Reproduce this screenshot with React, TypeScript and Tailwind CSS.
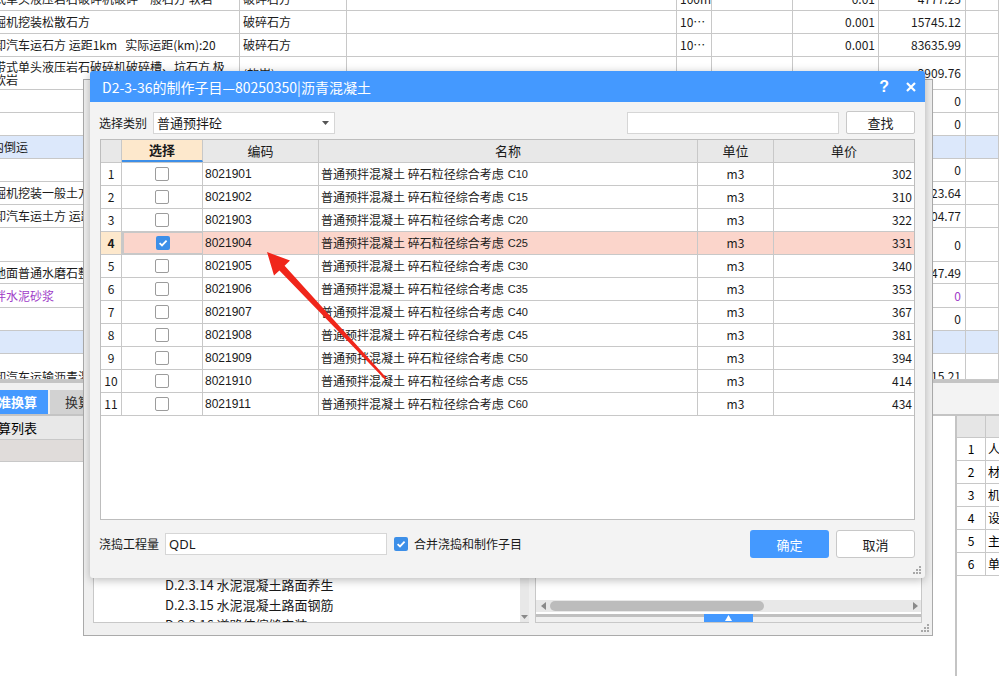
import React from "react";

const FONT = "font-['Noto_Sans_CJK_SC','Noto_Sans',sans-serif]";

type BgRow = {
  h: string;
  c1?: React.ReactNode;
  c1cls?: string;
  c2?: string;
  c4?: string;
  c6?: string;
  c7?: string;
  blue?: boolean;
  purple?: boolean;
};

const bgRows: BgRow[] = [
  { h: "h-[23px]", c1: "带式单头液压岩石破碎机破碎一般石方 软岩", c2: "破碎石方", c4: "100m3", c6: "0.01", c7: "4777.25" },
  { h: "h-[23px]", c1: "挖掘机挖装松散石方", c2: "破碎石方", c4: "10⋯", c6: "0.001", c7: "15745.12" },
  { h: "h-[23px]", c1: "自卸汽车运石方 运距1km\u00a0\u00a0 实际运距(km):20", c2: "破碎石方", c4: "10⋯", c6: "0.001", c7: "83635.99" },
  {
    h: "h-[33px]",
    c1: (
      <span className="flex flex-col leading-[13px]">
        <span>履带式单头液压岩石破碎机破碎槽、坑石方 极</span>
        <span className="ml-[12px]">软岩</span>
      </span>
    ),
    c2: "(软岩)",
    c7: "2909.76",
  },
  { h: "h-[23px]", c7: "0" },
  { h: "h-[23px]", c7: "0" },
  { h: "h-[23px]", c1: "场内倒运", c1cls: "-ml-[20px]", blue: true },
  { h: "h-[23px]", c7: "0" },
  { h: "h-[23px]", c1: "挖掘机挖装一般土方", c7: "123.64" },
  { h: "h-[23px]", c1: "自卸汽车运土方 运距1km", c7: "304.77" },
  { h: "h-[34px]", c7: "0" },
  { h: "h-[22px]", c1: "楼地面普通水磨石整体面层", c7: "447.49" },
  { h: "h-[24px]", c1: "预拌水泥砂浆", purple: true, c7: "0" },
  { h: "h-[23px]", c7: "0" },
  { h: "h-[23px]", blue: true },
  { h: "h-[26px]", c1: "自卸汽车运输沥青混凝土", c1cls: "-ml-[18px] mt-[20px]", c7: "15.21" },
];

const gridRows = [
  { n: 1, code: "8021901", g: "C10", p: "302" },
  { n: 2, code: "8021902", g: "C15", p: "310" },
  { n: 3, code: "8021903", g: "C20", p: "322" },
  { n: 4, code: "8021904", g: "C25", p: "331" },
  { n: 5, code: "8021905", g: "C30", p: "340" },
  { n: 6, code: "8021906", g: "C35", p: "353" },
  { n: 7, code: "8021907", g: "C40", p: "367" },
  { n: 8, code: "8021908", g: "C45", p: "381" },
  { n: 9, code: "8021909", g: "C50", p: "394" },
  { n: 10, code: "8021910", g: "C55", p: "414" },
  { n: 11, code: "8021911", g: "C60", p: "434" },
];

function Check({ on }: { on?: boolean }) {
  return on ? (
    <div className="w-[14px] h-[14px] rounded-[2px] bg-[#3d8fe8] flex items-center justify-center">
      <svg width="10" height="10" viewBox="0 0 10 10">
        <path d="M1.6 5.1 L4 7.4 L8.6 2.6" fill="none" stroke="white" strokeWidth="1.8" />
      </svg>
    </div>
  ) : (
    <div className="w-[14px] h-[14px] rounded-[2px] bg-white border border-[#9c9c9c]" />
  );
}

function Grip() {
  return (
    <svg width="8" height="8" viewBox="0 0 8 8">
      <rect x="6" y="0" width="2" height="2" fill="#a8a8a8" />
      <rect x="3" y="3" width="2" height="2" fill="#a8a8a8" />
      <rect x="6" y="3" width="2" height="2" fill="#a8a8a8" />
      <rect x="0" y="6" width="2" height="2" fill="#a8a8a8" />
      <rect x="3" y="6" width="2" height="2" fill="#a8a8a8" />
      <rect x="6" y="6" width="2" height="2" fill="#a8a8a8" />
    </svg>
  );
}

function Background() {
  const cell = "border-r border-b border-[#c8c8c8] overflow-hidden flex items-center whitespace-nowrap";
  return (
    <div className="flex flex-col w-[999px] h-[676px]">
      <div className="h-[380px] overflow-hidden shrink-0">
        <div className="-mt-[12px]">
          {bgRows.map((r, i) => (
            <div
              key={i}
              className={`grid grid-cols-[240px_107px_330px_35px_81px_86px_87px_33px] text-[12px] ${r.h} ${
                r.blue ? "bg-[#dce8fb]" : ""
              } ${r.purple ? "text-[#a03cc8]" : "text-[#1a1a1a]"}`}
            >
              <div className={cell}>
                <span className={`${r.c1cls ?? "-ml-[18px]"} leading-[14px]`}>{r.c1}</span>
              </div>
              <div className={`${cell} pl-[3px] ${i === 3 ? "items-start pt-[8px]" : ""}`}>{r.c2}</div>
              <div className={cell}></div>
              <div className={`${cell} pl-[3px]`}>{r.c4}</div>
              <div className={cell}></div>
              <div className={`${cell} justify-end pr-[3px]`}>{r.c6}</div>
              <div className={`${cell} justify-end pr-[4px] ${i === 15 ? "items-end" : ""}`}>
                <span className={i === 15 ? "-mb-[6px]" : ""}>{r.c7}</span>
              </div>
              <div className={cell}></div>
            </div>
          ))}
        </div>
      </div>
      <div className="h-[3px] bg-[#c4c4c4] shrink-0" />
      <div className="h-[31px] shrink-0 flex bg-[#f0f0f0]">
        <div className="w-[932px] flex items-end">
          <div className="w-[48px] h-[24px] bg-[#4499ff] text-white text-[13px] font-bold flex items-center overflow-hidden whitespace-nowrap">
            <span className="-ml-[15px]">标准换算</span>
          </div>
          <div className="ml-[2px] w-[70px] h-[24px] bg-[#d2d2d2] text-[#333] text-[13px] flex items-center pl-[15px]">
            换算信息
          </div>
        </div>
        <div className="flex-1 bg-[#f3f3f3]" />
      </div>
      <div className="h-[2px] bg-[#c4c4c4] shrink-0" />
      <div className="flex flex-1 min-h-0">
        <div className="w-[932px] shrink-0 flex flex-col">
          <div className="h-[24px] bg-[#e8e8e8] border-b border-[#c8c8c8] text-[13px] flex items-center overflow-hidden whitespace-nowrap">
            <span className="-ml-[15px]">换算列表</span>
          </div>
          <div className="h-[22px] bg-[#e0dcda] border-b border-[#c8c8c8]" />
        </div>
        <div className="w-[25px] shrink-0 border-r-2 border-[#c4c4c4]" />
        <div className="flex-1 min-w-0 overflow-hidden flex flex-col text-[12px]">
          <div className="h-[22px] shrink-0 bg-[#e6e6e6] flex border-b border-[#c8c8c8]">
            <div className="w-[29px] shrink-0 border-r border-[#c8c8c8]" />
          </div>
          {["人", "材", "机", "设", "主", "单"].map((t, i) => (
            <div key={i} className="h-[23px] shrink-0 flex border-b border-[#c8c8c8] whitespace-nowrap">
              <div className="w-[29px] shrink-0 border-r border-[#c8c8c8] flex items-center justify-center">{i + 1}</div>
              <div className="flex items-center pl-[2px]">{t}工费</div>
            </div>
          ))}
        </div>
      </div>
    </div>
  );
}

function BehindWindow() {
  return (
    <div className="absolute left-[83px] top-[79px] w-[850px] h-[557px] bg-[#f0f0f0] border border-[#aaaaaa] flex flex-col justify-end">
      <div className="flex pl-[9px] pr-[9px] pb-[12px]">
        <div className="w-[436px] h-[90px] bg-white border-l border-b border-[#c8c8c8] relative overflow-hidden">
          <div className="pt-[42px] pl-[71px] text-[13px] text-[#1a1a1a] leading-[20px] whitespace-nowrap">
            <div>D.2.3.14 水泥混凝土路面养生</div>
            <div>D.2.3.15 水泥混凝土路面钢筋</div>
            <div>D.2.3.16 道路伸缩缝安装</div>
          </div>
          <div className="absolute right-0 top-0 bottom-0 w-[9px] bg-[#e8e8e8] flex items-end justify-center pb-[2px]">
            <svg width="7" height="5" viewBox="0 0 7 5">
              <path d="M0 0 L7 0 L3.5 4 Z" fill="#8a8a8a" />
            </svg>
          </div>
        </div>
        <div className="ml-[6px] w-[387px] h-[90px] bg-white border border-t-0 border-[#c8c8c8] flex flex-col justify-end relative">
          <div className="h-[12px] bg-[#e8e8e8] flex items-center">
            <svg className="ml-[5px]" width="5" height="8" viewBox="0 0 5 8">
              <path d="M5 0 L5 8 L0 4 Z" fill="#8a8a8a" />
            </svg>
            <div className="ml-[4px] w-[214px] h-[10px] rounded-full bg-[#bcbcbc]" />
            <svg className="ml-auto mr-[3px]" width="5" height="8" viewBox="0 0 5 8">
              <path d="M0 0 L0 8 L5 4 Z" fill="#8a8a8a" />
            </svg>
          </div>
          <div className="h-[2px] bg-white" />
          <div className="h-[3px] bg-[#c0c0c0]" />
          <div className="h-[5px] bg-[#f0f0f0]" />
          <div className="absolute left-[168px] bottom-0 w-[49px] h-[8px] bg-[#4499ff] flex items-center justify-center">
            <svg width="7" height="6" viewBox="0 0 7 6">
              <path d="M3.5 0 L7 6 L0 6 Z" fill="white" />
            </svg>
          </div>
        </div>
      </div>
      <div className="absolute right-[3px] bottom-[3px]">
        <Grip />
      </div>
    </div>
  );
}

function Dialog() {
  const hcell = "border-r border-[#c8c8c8] flex items-center justify-center text-[13px]";
  return (
    <div className="absolute left-[90px] top-[71px] w-[835px] h-[507px] bg-[#f3f3f3] rounded-[3px] shadow-[0_2px_10px_rgba(0,0,0,0.28)] flex flex-col text-[#1a1a1a]">
      <div className="h-[31px] shrink-0 bg-[#4499ff] rounded-t-[3px] flex items-center text-white">
        <span className="ml-[12px] text-[14px] leading-none">D2-3-36的制作子目—80250350|沥青混凝土</span>
        <span className="ml-auto text-[16px] font-bold leading-none font-['Liberation_Sans',sans-serif]">?</span>
        <svg className="ml-[17px] mr-[9px]" width="10" height="10" viewBox="0 0 10 10">
          <path d="M1 1 L9 9 M9 1 L1 9" stroke="white" strokeWidth="2.2" />
        </svg>
      </div>

      <div className="mt-[9px] ml-[9px] mr-[10px] h-[23px] flex items-center shrink-0">
        <span className="text-[12px] w-[54px] leading-none">选择类别</span>
        <div className="w-[182px] h-[22px] bg-white border border-[#d6d6d6] flex items-center pl-[3px] text-[13px] leading-none">
          普通预拌砼
          <svg className="ml-auto mr-[5px]" width="7" height="4" viewBox="0 0 7 4">
            <path d="M0 0 L7 0 L3.5 4 Z" fill="#555" />
          </svg>
        </div>
        <div className="ml-auto w-[212px] h-[22px] bg-white border border-[#d6d6d6]" />
        <div className="ml-[7px] w-[69px] h-[23px] bg-white border border-[#c8c8c8] rounded-[2px] flex items-center justify-center text-[13px] leading-none">
          查找
        </div>
      </div>

      <div className="mt-[5px] ml-[10px] w-[815px] h-[381px] shrink-0 bg-white border border-[#bdbdbd] flex flex-col">
        <div className="h-[23px] flex bg-[#e8e8e8] border-b border-[#c8c8c8] shrink-0">
          <div className={`w-[21px] ${hcell}`} />
          <div className={`w-[81px] ${hcell} bg-[#fde8cc] font-bold border-b-2 border-b-[#3d8fe8]`}>选择</div>
          <div className={`w-[116px] ${hcell}`}>编码</div>
          <div className={`w-[379px] ${hcell}`}>名称</div>
          <div className={`w-[76px] ${hcell}`}>单位</div>
          <div className="flex-1 flex items-center justify-center text-[13px]">单价</div>
        </div>
        {gridRows.map((r) => {
          const sel = r.n === 4;
          const c = "border-r border-[#c8c8c8] flex items-center text-[12px] leading-none";
          return (
            <div key={r.n} className={`h-[23px] flex border-b border-[#c8c8c8] shrink-0 ${sel ? "bg-[#fbd5cb]" : ""}`}>
              <div className={`w-[21px] ${c} justify-center ${sel ? "bg-[#fde8cc] font-bold" : "bg-white"}`}>{r.n}</div>
              <div
                className={`w-[81px] ${c} justify-center ${sel ? "border-2 border-[#3d8fe8] -mt-[1px] h-[24px]" : ""}`}
              >
                <Check on={sel} />
              </div>
              <div className={`w-[116px] ${c} pl-[2px] font-['Liberation_Sans',sans-serif]`}>{r.code}</div>
              <div className={`w-[379px] ${c} pl-[2px] whitespace-nowrap`}>
                普通预拌混凝土 碎石粒径综合考虑 <span className="ml-[4px] font-['Liberation_Sans',sans-serif] text-[11px]">{r.g}</span>
              </div>
              <div className={`w-[76px] ${c} justify-center`}>m3</div>
              <div className="flex-1 flex items-center justify-end pr-[2px] text-[12px] leading-none">{r.p}</div>
            </div>
          );
        })}
      </div>

      <div className="mt-[10px] ml-[9px] mr-[10px] h-[28px] flex items-center shrink-0">
        <span className="text-[12px] w-[66px] leading-none">浇捣工程量</span>
        <div className="w-[222px] h-[22px] bg-white border border-[#d6d6d6] flex items-center pl-[3px] text-[13px] leading-none font-['Noto_Sans',sans-serif]">
          QDL
        </div>
        <div className="ml-[7px]">
          <Check on />
        </div>
        <span className="ml-[6px] text-[12px] leading-none">合并浇捣和制作子目</span>
        <div className="ml-auto w-[79px] h-[28px] bg-[#4499ff] rounded-[3px] text-white text-[13px] flex items-center justify-center leading-none">
          确定
        </div>
        <div className="ml-[7px] w-[79px] h-[28px] bg-white border border-[#c8c8c8] rounded-[3px] text-[13px] flex items-center justify-center leading-none">
          取消
        </div>
      </div>
      <div className="absolute right-[4px] bottom-[4px]">
        <Grip />
      </div>
    </div>
  );
}

export default function App() {
  return (
    <div className={`relative w-[999px] h-[676px] overflow-hidden bg-white ${FONT}`}>
      <Background />
      <BehindWindow />
      <Dialog />
      <svg className="absolute left-0 top-0 pointer-events-none" width="999" height="676" viewBox="0 0 999 676">
        <polygon
          points="267,252 290,260.6 284.6,265.7 386.8,378.2 385.2,379.8 279.4,270.5 274,275.6"
          fill="#f0261b"
        />
      </svg>
    </div>
  );
}
